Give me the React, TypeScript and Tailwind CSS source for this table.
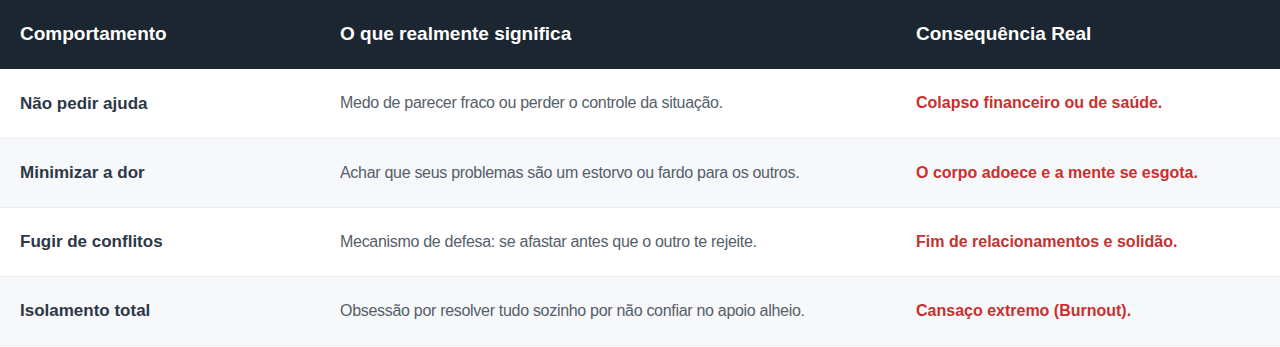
const rows = [
  {
    behavior: "Não pedir ajuda",
    meaning: "Medo de parecer fraco ou perder o controle da situação.",
    consequence: "Colapso financeiro ou de saúde.",
  },
  {
    behavior: "Minimizar a dor",
    meaning: "Achar que seus problemas são um estorvo ou fardo para os outros.",
    consequence: "O corpo adoece e a mente se esgota.",
  },
  {
    behavior: "Fugir de conflitos",
    meaning: "Mecanismo de defesa: se afastar antes que o outro te rejeite.",
    consequence: "Fim de relacionamentos e solidão.",
  },
  {
    behavior: "Isolamento total",
    meaning: "Obsessão por resolver tudo sozinho por não confiar no apoio alheio.",
    consequence: "Cansaço extremo (Burnout).",
  },
];

export default function App() {
  return (
    <div className="w-[1280px] bg-white font-['Liberation_Sans',Arial,sans-serif]">
      <table className="w-full table-fixed border-collapse">
        <colgroup>
          <col className="w-[320px]" />
          <col className="w-[576px]" />
          <col />
        </colgroup>
        <thead>
          <tr className="h-[69px] bg-[#1c2630] text-left">
            <th className="px-5 text-[19px] font-bold text-white">Comportamento</th>
            <th className="px-5 text-[19px] font-bold text-white">O que realmente significa</th>
            <th className="px-5 text-[19px] font-bold text-white">Consequência Real</th>
          </tr>
        </thead>
        <tbody>
          {rows.map((row, i) => (
            <tr
              key={row.behavior}
              className={`h-[69px] border-b border-[#e9edf1] ${i % 2 === 1 ? "bg-[#f7f8fa]" : "bg-white"}`}
            >
              <td className="px-5 text-[17px] font-bold text-[#2d3748]">{row.behavior}</td>
              <td className="px-5 text-[16px] tracking-[-0.3px] text-[#555e6a]">{row.meaning}</td>
              <td className="px-5 text-[16px] font-bold text-[#c8302f]">{row.consequence}</td>
            </tr>
          ))}
        </tbody>
      </table>
    </div>
  );
}
